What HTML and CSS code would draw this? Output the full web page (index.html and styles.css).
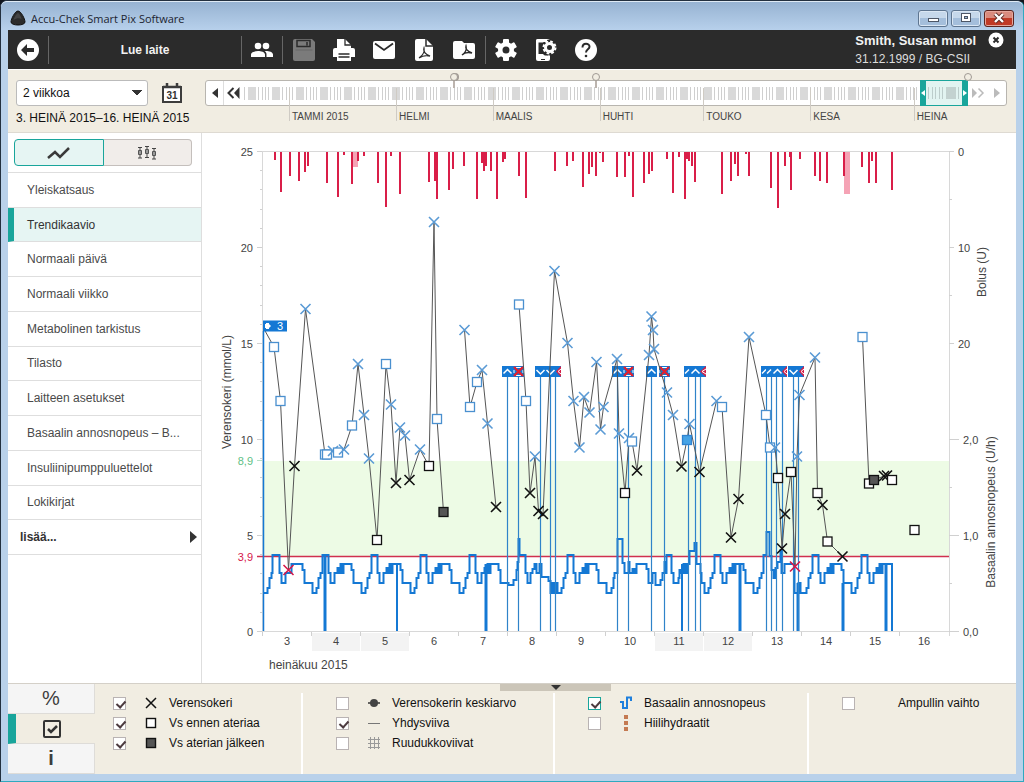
FILE: index.html
```html
<!DOCTYPE html>
<html lang="fi">
<head>
    <meta charset="UTF-8">
    <meta name="viewport" content="width=device-width, initial-scale=1.0">
    <title>Accu-Chek Smart Pix Software</title>
    <link rel="stylesheet" href="styles.css">
</head>
<body>
    <div class="window">
        <div class="titlebar">
            <svg class="app-icon" width="16" height="16" viewBox="0 0 16 16"><path d="M8 1C5 1 1 9 1 12c0 4 14 4 14 0C15 9 11 1 8 1z" fill="#2b2b2b" stroke="#111"/><path d="M8 3c-2 1-4 5-4.500 7 3-2 6-2 8-1C11 7 10 4 8 3z" fill="#444"/></svg>
            <span class="app-title">Accu-Chek Smart Pix Software</span>
            <button class="win-btn" aria-label="Pienennä"><svg width="14" height="12" viewBox="0 0 14 12"><rect x="2.500" y="6.500" width="10" height="3" fill="#fff" stroke="#4d5666"/></svg></button>
            <button class="win-btn" aria-label="Suurenna"><svg width="14" height="12" viewBox="0 0 14 12"><rect x="2.500" y="1.500" width="9" height="8" fill="#fff" stroke="#4d5666"/><rect x="5.500" y="4.500" width="3" height="2" fill="#9db8d6" stroke="#4d5666"/></svg></button>
            <button class="win-btn win-close" aria-label="Sulje"><svg width="14" height="12" viewBox="0 0 14 12"><path d="M3 2l8 8M11 2l-8 8" stroke="#5a2a25" stroke-width="4"/><path d="M3 2l8 8M11 2l-8 8" stroke="#fff" stroke-width="2.400"/></svg></button>
        </div>

        <div class="toolbar">
            <button class="tool" aria-label="Takaisin"><svg width="24" height="24" viewBox="0 0 24 24"><circle cx="12" cy="12" r="11" fill="#fff"/><path d="M5 12l6-6v4h7v4h-7v4z" fill="#2b2b2b"/></svg></button>
            <button class="read-device">Lue laite</button>
            <button class="tool" aria-label="Potilaat"><svg width="24" height="24" viewBox="0 0 24 24" fill="#fff"><circle cx="8" cy="8" r="3.300"/><circle cx="16" cy="8" r="3.300"/><path d="M1 19v-2.500C1 14 5 13 8 13s7 1 7 3.500V19zM16 13c3 0 7 1 7 3.500V19h-6.500v-2.500c0-1.500-.7-2.600-1.800-3.400z"/></svg></button>
            <div class="tool-group">
                <button class="tool" aria-label="Tallenna" disabled><svg width="24" height="24" viewBox="0 0 24 24"><path d="M1 3q0-2 2-2h17l3 3v17q0 2-2 2H3q-2 0-2-2z" fill="#7b7b7b"/><path d="M5 2.500h13v6H5zM15 4v3.500" fill="none" stroke="#2b2b2b" stroke-width="1.500"/><path d="M3.500 12h17" stroke="#696969"/></svg></button>
                <button class="tool" aria-label="Tulosta"><svg width="24" height="24" viewBox="0 0 24 24"><path d="M1 19v-7q0-2 2-2h2V1h8l6 6v3h2q2 0 2 2v7h-4v4H5v-4z" fill="#fff"/><path d="M13 1v6h6M6.500 16h11M6.500 19h11" fill="none" stroke="#2b2b2b" stroke-width="1.300"/></svg></button>
                <button class="tool" aria-label="Sähköposti"><svg width="24" height="24" viewBox="0 0 24 24"><rect x="1" y="3" width="22" height="18" rx="2" fill="#fff"/><path d="M3 5.500l9 6.500 9-6.500" fill="none" stroke="#2b2b2b" stroke-width="1.800"/></svg></button>
                <button class="tool" aria-label="PDF"><svg width="24" height="24" viewBox="0 0 24 24"><path d="M3 3q0-2 2-2h9l7 7v13q0 2-2 2H5q-2 0-2-2z" fill="#fff"/><path d="M14 1v7h7" fill="none" stroke="#2b2b2b" stroke-width="1.500"/><path d="M12 10c-1 3 1 6 6 8-4-1-8 0-11 2 3-2 6-6 5-10z" fill="none" stroke="#2b2b2b" stroke-width="1.300"/></svg></button>
                <button class="tool" aria-label="PDF-kansio"><svg width="24" height="24" viewBox="0 0 24 24"><path d="M1 5q0-2 2-2h7l2 2h9q2 0 2 2v12q0 2-2 2H3q-2 0-2-2z" fill="#fff"/><path d="M14 8c-1 3 1 5 6 7-4-1-8 0-10 2 3-2 5-5 4-9z" fill="none" stroke="#2b2b2b" stroke-width="1.400"/></svg></button>
            </div>
            <button class="tool" aria-label="Asetukset"><svg width="24" height="24" viewBox="0 0 24 24"><g fill="#fff"><circle cx="12" cy="12" r="8"/><rect x="9" y="1" width="6" height="22" rx="1"/><rect x="9" y="1" width="6" height="22" rx="1" transform="rotate(60 12 12)"/><rect x="9" y="1" width="6" height="22" rx="1" transform="rotate(120 12 12)"/></g><circle cx="12" cy="12" r="3.500" fill="#2b2b2b"/></svg></button>
            <button class="tool" aria-label="Laitteen asetukset"><svg width="24" height="24" viewBox="0 0 24 24"><rect x="2" y="1" width="14" height="22" rx="2" fill="#fff"/><path d="M4 4.500h10v13H4z" fill="#2b2b2b"/><circle cx="15.500" cy="9.500" r="8" fill="#2b2b2b"/><path d="M2 19V3q0-2 2-2h9v3H4.500v12H9l3 3z" fill="#fff"/><path d="M7 21.500h4" stroke="#2b2b2b"/><circle cx="15.500" cy="9.500" r="4" fill="none" stroke="#fff" stroke-width="3"/><circle cx="15.500" cy="9.500" r="6" fill="none" stroke="#fff" stroke-width="2" stroke-dasharray="2.700 2"/></svg></button>
            <button class="tool" aria-label="Ohje"><svg width="24" height="24" viewBox="0 0 24 24"><circle cx="12" cy="12" r="11" fill="#fff"/><path d="M8.500 9.500c0-5 7-4.500 7-.8 0 2.600-3.500 2.600-3.500 5.800" fill="none" stroke="#2b2b2b" stroke-width="2"/><circle cx="12" cy="18" r="1.300" fill="#2b2b2b"/></svg></button>
            <div class="patient">
                <strong>Smith, Susan mmol</strong>
                <span>31.12.1999 / BG-CSII</span>
            </div>
            <button class="patient-close" aria-label="Sulje potilas"><svg width="16" height="16" viewBox="0 0 16 16"><circle cx="8" cy="8" r="7.500" fill="#fff"/><path d="M5.500 5.500l5 5M10.500 5.500l-5 5" stroke="#2b2b2b" stroke-width="2"/></svg></button>
        </div>

        <div class="period">
            <div class="period-picker">
                <div class="period-row">
                    <select class="period-select" aria-label="Ajanjakso">
                        <option>2 viikkoa</option>
                    </select>
                    <button class="calendar" aria-label="Kalenteri"><svg width="22" height="22" viewBox="0 0 22 22"><path d="M2 5h18v15H2z" fill="#fff" stroke="#3d3d3d" stroke-width="2"/><path d="M2 5h18M6 1v5M16 1v5" stroke="#3d3d3d" stroke-width="2.500"/><text x="11" y="17" class="calendar-day">31</text></svg></button>
                </div>
                <div class="period-dates">3. HEINÄ 2015–16. HEINÄ 2015</div>
            </div>
            <div class="timeline">
                <div class="track">
                    <button class="step step-first" aria-label="Edellinen"><svg width="8" height="12" viewBox="0 0 8 12"><path d="M7 1v10L1 6z" fill="#333"/></svg></button>
                    <button class="step" aria-label="Taaksepäin"><svg width="14" height="12" viewBox="0 0 14 12"><path d="M6.500 1l-5 5 5 5" fill="none" stroke="#333" stroke-width="2"/><path d="M12.500 0v12L7 6z" fill="#333"/></svg></button>
                    <div class="days"></div>
                    <div class="range"><span class="handle"><svg width="4" height="6" viewBox="0 0 4 6"><path d="M4 0v6L0 3z" fill="#fff"/></svg></span><div class="days range-days"></div><span class="handle"><svg width="4" height="6" viewBox="0 0 4 6"><path d="M0 0v6l4-3z" fill="#fff"/></svg></span></div>
                    <button class="step" aria-label="Eteenpäin"><svg width="14" height="12" viewBox="0 0 14 12"><path d="M1 1v10l5-5z" fill="#bbb"/><path d="M7.500 1.500L12 6l-4.500 4.500" fill="none" stroke="#bbb" stroke-width="1.500"/></svg></button>
                    <button class="step step-last" aria-label="Seuraava"><svg width="8" height="12" viewBox="0 0 8 12"><path d="M1 1v10l6-5z" fill="#bbb"/></svg></button>
                    <span class="pin pin-helmi"></span>
                    <span class="pin pin-maalis"></span>
                    <span class="pin pin-heina"></span>
                </div>
                <div class="months">
                    <span>TAMMI 2015</span><span>HELMI</span><span>MAALIS</span><span>HUHTI</span><span>TOUKO</span><span>KESA</span><span>HEINA</span>
                </div>
            </div>
        </div>

        <div class="main">
            <div class="sidebar">
                <div class="view-toggle">
                    <button class="active" aria-label="Trendi"><svg width="24" height="14" viewBox="0 0 24 14"><path d="M1 12l7-6 5 5L22 2" fill="none" stroke="#3a3a3a" stroke-width="2.500"/></svg></button>
                    <button aria-label="Hajonta"><svg width="20" height="14" viewBox="0 0 20 14"><path d="M1 1.500h4M3 1v11M1 12h4M8 .5h4M10 1v11M8 11.500h4M15 2.500h4M17 2v11M15 13h4" stroke="#444"/><path d="M1.500 4.500h3v4h-3zM8.500 3.500h3v4h-3zM15.500 5.500h3v4h-3z" fill="#999" stroke="#555"/></svg></button>
                </div>
                <ul class="menu">
                    <li><a href="#">Yleiskatsaus</a></li>
                    <li><a href="#" class="active">Trendikaavio</a></li>
                    <li><a href="#">Normaali päivä</a></li>
                    <li><a href="#">Normaali viikko</a></li>
                    <li><a href="#">Metabolinen tarkistus</a></li>
                    <li><a href="#">Tilasto</a></li>
                    <li><a href="#">Laitteen asetukset</a></li>
                    <li><a href="#">Basaalin annosnopeus – B...</a></li>
                    <li><a href="#">Insuliinipumppuluettelot</a></li>
                    <li><a href="#">Lokikirjat</a></li>
                    <li><a href="#" class="more">lisää...<svg width="7" height="12" viewBox="0 0 7 12"><path d="M0 0v12l7-6z" fill="#333"/></svg></a></li>
                </ul>
            </div>
            <div class="chart-area">
                <svg id="chart" class="chart" viewBox="202 133 814 550" role="img" aria-label="Trendikaavio"></svg>
            </div>
        </div>

        <div class="footer">
            <button class="panel-handle" aria-label="Piilota selite"><svg width="10" height="5" viewBox="0 0 10 5"><path d="M0 0h10L5 5z" fill="#333"/></svg></button>
            <div class="tabs">
                <button aria-label="Prosentit">%</button>
                <button class="active" aria-label="Selite"><svg width="18" height="18" viewBox="0 0 18 18"><rect x="1" y="1" width="16" height="16" rx="1" fill="none" stroke="#333" stroke-width="2"/><path d="M5 9l3 3 6-6" fill="none" stroke="#333" stroke-width="2.500"/></svg></button>
                <button class="info" aria-label="Tiedot">i</button>
            </div>
            <div class="legends">
                <div class="legend legend-first">
                    <label><input type="checkbox" checked><svg viewBox="0 0 16 16"><path d="M3 3l10 10M13 3L3 13" stroke="#111" stroke-width="1.500"/></svg>Verensokeri</label>
                    <label><input type="checkbox" checked><svg viewBox="0 0 16 16"><rect x="3.500" y="3.500" width="9" height="9" fill="#fff" stroke="#111" stroke-width="1.400"/></svg>Vs ennen ateriaa</label>
                    <label><input type="checkbox" checked><svg viewBox="0 0 16 16"><rect x="3.500" y="3.500" width="9" height="9" fill="#555" stroke="#111" stroke-width="1.400"/></svg>Vs aterian jälkeen</label>
                </div>
                <div class="legend">
                    <label><input type="checkbox"><svg viewBox="0 0 16 16"><path d="M2 8h12" stroke="#333" stroke-width="1.500"/><circle cx="8" cy="8" r="4" fill="#444"/></svg>Verensokerin keskiarvo</label>
                    <label><input type="checkbox" checked><svg viewBox="0 0 16 16"><path d="M2 8.500h12" stroke="#777"/></svg>Yhdysviiva</label>
                    <label><input type="checkbox"><svg viewBox="0 0 16 16"><path d="M2 4.500h12M2 8.500h12M2 12.500h12M4.500 2v12M8.500 2v12M12.500 2v12" stroke="#999"/></svg>Ruudukkoviivat</label>
                </div>
                <div class="legend">
                    <label><input type="checkbox" class="teal" checked><svg viewBox="0 0 16 16"><path d="M2 7h3v6h4V2.500h4V6" fill="none" stroke="#1e7fdc" stroke-width="2"/></svg>Basaalin annosnopeus</label>
                    <label><input type="checkbox"><svg viewBox="0 0 16 16"><path d="M8 0v16" stroke="#c47a52" stroke-width="4" stroke-dasharray="4 2"/></svg>Hiilihydraatit</label>
                </div>
                <div class="legend">
                    <label><input type="checkbox"><svg viewBox="0 0 16 16"></svg>Ampullin vaihto</label>
                </div>
            </div>
        </div>
    </div>

    <script src="script.js"></script>
</body>
</html>
```
FILE: styles.css
```css
* {
    box-sizing: border-box;
}
body {
    margin: 0;
    background: #10141c;
    font-family: "Liberation Sans", Arial, sans-serif;
    font-size: 12px;
    color: #222;
}
button {
    font-family: inherit;
    font-size: 12px;
    padding: 0;
    border: 0;
    background: none;
    display: flex;
    align-items: center;
    justify-content: center;
}

.window {
    min-height: 100vh;
    display: flex;
    flex-direction: column;
    padding: 0 7px 7px;
    border: 1px solid #23303f;
    border-right-color: #2fa9bf;
    border-bottom-color: #2fa9bf;
    border-radius: 7px 7px 0 0;
    background: #b9d1ea;
}
.titlebar {
    height: 29px;
    margin: 0 -7px;
    padding: 0 9px;
    display: flex;
    align-items: center;
    gap: 3px;
    border-top: 1px solid #dfeaf5;
    border-radius: 6px 6px 0 0;
    background: linear-gradient(#97b3d2, #b7d0eb);
}
.app-title {
    flex: 1;
    margin-left: 2px;
    font-family: "Open Sans", "Noto Sans", sans-serif;
    font-size: 11px;
    color: #1c2430;
    padding-top: 4px;
}
.app-icon {
    margin-top: 4px;
}
.win-btn {
    width: 30px;
    height: 17px;
    margin-top: 4px;
    border: 1px solid #5e7590;
    border-radius: 3px;
    box-shadow: inset 0 0 0 1px #dbe7f4;
    background: linear-gradient(#c6d8eb 50%, #a4bedb 50%);
}
.win-close {
    border-color: #5b2520;
    box-shadow: inset 0 0 0 1px #e5a79c;
    background: linear-gradient(#d98b7e 50%, #c03a26 50%);
}

.toolbar {
    height: 39px;
    display: flex;
    align-items: center;
    background: #2b2b2b;
    color: #fff;
}
.tool {
    width: 40px;
    height: 28px;
}
.read-device {
    width: 194px;
    height: 28px;
    border-left: 1px solid #666;
    border-right: 1px solid #666;
    font-weight: bold;
    color: #f2f2f2;
}
.tool-group {
    display: flex;
    padding: 0 1px;
    border-left: 1px solid #666;
    border-right: 1px solid #666;
}
.patient {
    margin-left: auto;
    display: flex;
    flex-direction: column;
    line-height: 18px;
    color: #ddd;
}
.patient strong {
    font-size: 13px;
    color: #f2f2f2;
}
.patient-close {
    align-self: flex-start;
    margin: 2px 12px 0;
}

.period {
    height: 64px;
    display: flex;
    gap: 16px;
    padding: 10px 9px 0 8px;
    background: #f1ede2;
    border-top: 1px solid #fff;
    border-bottom: 1px solid #dedad2;
}
.period-picker {
    width: 173px;
    white-space: nowrap;
}
.period-row {
    display: flex;
    gap: 12px;
}
.period-select {
    width: 132px;
    height: 26px;
    padding: 0 6px;
    border: 1px solid #bbb;
    border-radius: 3px;
    appearance: none;
    font: inherit;
    color: #111;
    background: linear-gradient(to bottom left, #333 50%, transparent 50%) right 10px center / 5px 6px no-repeat, linear-gradient(to bottom right, #333 50%, transparent 50%) right 5px center / 5px 6px no-repeat, #fff;
}
.calendar {
    width: 24px;
    height: 26px;
}
.calendar-day {
    font-size: 10px;
    font-weight: bold;
    fill: #333;
    text-anchor: middle;
}
.period-dates {
    margin-top: 4px;
    line-height: 16px;
    color: #111;
}
.timeline {
    flex: 1;
}
.track {
    position: relative;
    height: 26px;
    display: flex;
    align-items: stretch;
    border: 1px solid #b8b5af;
    border-radius: 3px;
    background: #fff;
}
.step {
    width: 20px;
}
.step-first,
.step-last {
    width: 18px;
}
.step-first {
    border-right: 1px solid #ddd;
}
.days {
    flex: 1;
    margin: 6px 1px 5px 0;
    background: repeating-linear-gradient(90deg, #cfcfcf 0 1px, transparent 1px 4px, #d9d9d9 4px 12px, transparent 12px 14px, #cfcfcf 14px 15px, transparent 15px 18px, #cfcfcf 18px 19px, transparent 19px 21px, #cfcfcf 21px 22px, transparent 22px 24px);
}
.range {
    width: 48px;
    margin: -1px 0;
    display: flex;
    border-top: 1px solid #19a59b;
    border-bottom: 1px solid #19a59b;
    background: #e2f4f1;
}
.range-days {
    margin: 6px 2px;
    background: repeating-linear-gradient(90deg, #bccdcb 0 1px, transparent 1px 4px, #bccdcb 4px 5px, transparent 5px 7px, #bccdcb 7px 8px, transparent 8px 11px, #bccdcb 11px 12px, transparent 12px 14px, #bccdcb 14px 15px, transparent 15px 18px, #c3d2d0 18px 28px, transparent 28px 30px);
}
.handle {
    width: 6px;
    display: flex;
    align-items: center;
    justify-content: center;
    background: #19a59b;
}
.pin {
    position: absolute;
    top: -8px;
    width: 8px;
    height: 8px;
    border: 1px solid #a09a94;
    border-radius: 50%;
    background: #f1ede2;
}
.pin::after {
    content: "";
    position: absolute;
    left: 2px;
    top: 7px;
    width: 2px;
    height: 7px;
    background: #bcb4ae;
}
.pin-helmi {
    left: 30.5%;
    box-shadow: 1px 0 0 #a09a94;
}
.pin-maalis {
    left: 48.2%;
}
.pin-heina {
    left: 94.8%;
}
.pin-heina::after {
    display: none;
}
.months {
    position: relative;
    margin: -18px 0 0 84px;
    display: grid;
    grid-template-columns: 31fr 28fr 31fr 30fr 31fr 30fr 27fr;
    font-size: 10px;
    color: #444;
    pointer-events: none;
}
.months span {
    height: 33px;
    padding: 22px 0 0 2px;
    border-left: 1px solid #cfcbc4;
    white-space: nowrap;
    line-height: 14px;
}

.main {
    flex: 1;
    display: flex;
    background: #fff;
}
.sidebar {
    width: 194px;
    border-right: 1px solid #dedede;
}
.view-toggle {
    display: flex;
    padding: 6px 9px 6px 6px;
    border-bottom: 1px solid #dedede;
}
.view-toggle button {
    flex: 1;
    height: 27px;
    border: 1px solid #c4bfbc;
    border-left: 0;
    border-radius: 0 4px 4px 0;
    background: #f1edea;
}
.view-toggle .active {
    border: 1px solid #19a59b;
    border-radius: 4px 0 0 4px;
    background: #e6f5f3;
}
.menu {
    list-style: none;
    margin: 0;
    padding: 0;
    height: 382px;
    display: grid;
    grid-auto-rows: 1fr;
}
.menu a {
    height: 100%;
    display: flex;
    align-items: center;
    justify-content: space-between;
    padding-left: 19px;
    border-bottom: 1px solid #dedede;
    color: #4a4a4a;
    text-decoration: none;
}
.menu .active {
    padding-left: 13px;
    border-left: 6px solid #19a59b;
    background: #e6f5f3;
    color: #333;
}
.menu .more {
    padding: 0 4px 0 12px;
    font-weight: bold;
    color: #333;
}
.chart-area {
    flex: 1;
    min-width: 0;
}
.chart {
    display: block;
    width: 100%;
}
.chart text {
    font-size: 11px;
    fill: #444;
}
.chart .axis-title,
.chart .month {
    font-size: 12px;
}
.chart .high {
    fill: #5fbf86;
}
.chart .low {
    fill: #d6174a;
}
.chart .flag-text {
    fill: #fff;
}

.footer {
    position: relative;
    height: 91px;
    display: flex;
    background: #f1ede2;
    border-top: 1px solid #d4d0c8;
}
.panel-handle {
    position: absolute;
    left: calc(50% - 12px);
    top: 0;
    width: 111px;
    height: 7px;
    background: #cbc5b8;
}
.tabs {
    width: 87px;
    display: flex;
    flex-direction: column;
}
.tabs button {
    flex: 1;
    border-right: 1px solid #dedcd8;
    border-bottom: 1px solid #dedcd8;
    background: #f5f5f5;
    font-size: 20px;
    color: #3d3d3d;
}
.tabs .active {
    border-left: 8px solid #19a59b;
    border-right: 0;
    padding-right: 8px;
    background: #f1ede2;
}
.tabs .info {
    font-weight: bold;
}
.legends {
    flex: 1;
    display: grid;
    grid-template-columns: 208fr 252fr 254fr 207fr;
    padding-top: 9px;
}
.legend {
    padding-left: 33px;
    border-right: 2px solid #fff;
    white-space: nowrap;
}
.legend-first {
    padding-left: 18px;
}
.legend:last-child {
    border-right: 0;
}
.legend label {
    height: 20px;
    display: flex;
    align-items: center;
    color: #111;
}
.legend svg {
    width: 16px;
    height: 16px;
    margin: 0 10px 0 17px;
}
.legend input {
    appearance: none;
    width: 13px;
    height: 13px;
    margin: 0;
    border: 1px solid #b9b3b3;
    background: #fff;
    position: relative;
}
.legend .teal {
    border-color: #19a59b;
}
.legend input:checked::after {
    content: "";
    position: absolute;
    left: 4px;
    top: 1px;
    width: 4px;
    height: 7px;
    border: solid #4d3b3f;
    border-width: 0 2px 2px 0;
    transform: rotate(42deg);
}
```
FILE: script.js
```javascript
const chart = document.getElementById('chart');
const LEFT = 263, RIGHT = 949, TOP = 152, BOTTOM = 631;
const DAY = 49;
let out = '';

function line(x1, y1, x2, y2, color, width = 1) {
    out += `<line x1="${x1}" y1="${y1}" x2="${x2}" y2="${y2}" stroke="${color}" stroke-width="${width}"/>`;
}
function rect(x, y, w, h, fill) {
    out += `<rect x="${x}" y="${y}" width="${w}" height="${h}" fill="${fill}"/>`;
}
function text(x, y, value, anchor = 'start', cls = '') {
    out += `<text x="${x}" y="${y}" text-anchor="${anchor}" class="${cls}">${value}</text>`;
}
function verticalText(x, y, value) {
    out += `<text transform="translate(${x} ${y}) rotate(-90)" text-anchor="middle" class="axis-title">${value}</text>`;
}

// target range and axes
rect(LEFT, 461, RIGHT - LEFT, 95, '#edfbe5');
line(LEFT - 5, 151.5, RIGHT + 4, 151.5, '#d8d8d8');
line(LEFT - 5, 631.5, RIGHT + 10, 631.5, '#d8d8d8');
line(262.5, TOP, 262.5, 636, '#d8d8d8');
line(949.5, TOP, 949.5, 636, '#d8d8d8');
for (let v = 0; v <= 25; v++) {
    const y = Math.round(BOTTOM - v * 19.2) + 0.5;
    line(v % 5 ? 260 : 257, y, 262, y, '#d0d0d0');
    if (v % 5 === 0) text(253, y + 4, v, 'end');
}
[[152, '0'], [248, '10'], [344, '20']].forEach(([y, t]) => {
    line(949, y - 0.5, 954, y - 0.5, '#d0d0d0');
    if (y < 300) line(949, y + 47.5, 952, y + 47.5, '#d0d0d0');
    text(958, y + 4, t);
});
[[440, '2,0'], [536, '1,0'], [632, '0,0']].forEach(([y, t]) => {
    line(949, y - 0.5, 959, y - 0.5, '#d0d0d0');
    if (y < 600) line(949, y + 47.5, 952, y + 47.5, '#d0d0d0');
    text(963, y + 4, t);
});
text(253, 465, '8,9', 'end', 'high');
text(253, 561, '3,9', 'end', 'low');
line(257, 460.5, 262, 460.5, '#b5dfc4');
verticalText(231, 392, 'Verensokeri (mmol/L)');
verticalText(986, 272, 'Bolus (U)');
verticalText(995, 512, 'Basaalin annosnopeus (U/h)');

// day labels, weekends shaded
for (let d = 3; d <= 16; d++) {
    const x = LEFT + (d - 3) * DAY;
    if ([4, 5, 11, 12].includes(d)) rect(x, 633, DAY - 1, 18, '#f3f3f3');
    line(x - 0.5, 632, x - 0.5, 636, '#d0d0d0');
    text(x + 24, 645, d, 'middle');
}
text(269, 669, 'heinäkuu 2015', 'start', 'month');

// bolus bars: x, bottom
rect(353, TOP, 5, 15, '#f5a3b5');
rect(844, TOP, 6, 42, '#f5a3b5');
const bolus = [
    [275, 160], [281, 192], [290, 176], [299, 181], [305, 172], [308, 166], [327, 183], [338, 197], [344, 155],
    [352, 184], [358, 161], [364, 156], [378, 183], [386, 207], [391, 156], [400, 194], [429, 182], [435, 181],
    [437, 199], [449, 190], [453, 169], [464, 166], [477, 199], [482, 163], [484, 171], [486, 166], [491, 171],
    [497, 199], [503, 162], [505, 159], [519, 176], [526, 198], [555, 171], [567, 166], [573, 161], [583, 187],
    [589, 174], [592, 167], [596, 176], [600, 153], [603, 162], [617, 177], [625, 177], [629, 156], [633, 197],
    [644, 183], [649, 174], [652, 171], [667, 159], [673, 193], [679, 157], [685, 199], [687, 159], [689, 161],
    [692, 166], [695, 182], [722, 194], [731, 181], [735, 164], [738, 176], [746, 154], [749, 176], [771, 188],
    [778, 208], [785, 166], [790, 157], [791, 190], [800, 159], [815, 176], [820, 181], [827, 183], [844, 176],
    [862, 167], [869, 183], [872, 161], [876, 183], [892, 190]
];
bolus.forEach(([x, y]) => rect(x - 1, TOP, 2, y - TOP, '#d91e48'));

line(257, 556.5, RIGHT, 556.5, '#d0304f', 1.5);

// basal rate steps: offset in the day, y
const normal = [[0, 593], [4, 588], [6, 578], [8, 573], [10, 555], [16, 573], [18, 583], [22, 573], [25, 568],
    [27, 573], [28, 564], [29, 573], [31, 564], [39, 570], [41, 583]];
const days = {
    3: [[0, 593], [4, 588], [6, 578], [8, 573], [9, 555], [16, 573], [18, 583], [22, 573], [28, 564], [39, 570], [41, 583]],
    8: [[0, 585], [5, 580], [8, 570], [9, 562], [10, 539], [11, 555], [17, 573], [19, 583], [22, 573], [24, 569],
        [26, 564], [28, 573], [31, 564], [33, 577], [40, 581], [42, 593], [44, 583], [46, 593], [48, 583]],
    10: [[0, 593], [5, 588], [7, 578], [8, 573], [11, 539], [16, 563], [18, 573], [22, 562], [23, 573], [26, 569],
        [28, 573], [30, 564], [40, 569], [42, 583], [46, 573]],
    11: [[0, 585], [5, 580], [7, 573], [9, 562], [10, 573], [11, 555], [16, 573], [18, 583], [23, 578], [24, 570],
        [26, 573], [28, 564], [30, 573], [32, 564], [34, 551], [39, 543], [41, 564], [45, 573], [46, 583]],
    13: [[0, 593], [4, 588], [6, 578], [8, 573], [10, 555], [13, 532], [16, 556], [18, 570], [20, 578], [22, 568],
        [24, 562], [27, 550], [28, 573], [31, 564], [41, 593], [45, 583], [47, 593]]
};
let path = 'M263.5 593';
for (let d = 3; d <= 15; d++) {
    (days[d] || normal).forEach(([dx, y]) => {
        if (d === 15 && dx > 36) return;
        path += `H${LEFT + 0.5 + (d - 3) * DAY + dx}V${y}`;
    });
}
out += `<path d="${path}H892V631" fill="none" stroke="#1478d4" stroke-width="2"/>`;
[[325, 3, 555], [397, 2, 564], [486, 3, 564], [682, 2, 564], [740, 3, 564], [798, 3, 583], [843, 3, 583], [886, 3, 564]]
    .forEach(([x, w, y]) => line(x, y, x, BOTTOM, '#1478d4', w));
line(263.5, 331, 263.5, BOTTOM, '#1478d4', 1.5);

// temporary basal rates
[507.5, 518.5, 540.5, 550.5, 555.5, 617.5, 628.5, 651.5, 664.5, 688.5, 695.5, 700.5, 766.5, 771.5, 776.5, 782.5, 793.5, 798.5]
    .forEach(x => line(x, 377, x, BOTTOM, '#2f83c9', 1.2));
const flags = [
    [502, 11, 'up'], [513, 11, 'stop'], [535, 11, 'down'], [545, 11, 'down'], [556, 5, 'cut'], [612, 11, 'up'],
    [623, 11, 'stop'], [646, 11, 'up'], [659, 11, 'stop'], [684, 6, 'slash'], [690, 11, 'up'], [700, 6, 'cut'],
    [761, 6, 'slash'], [766, 6, 'slash'], [772, 11, 'up'], [782, 5, 'cut'], [788, 11, 'down'], [799, 5, 'cut']
];
const marks = {
    up: 'M1.5 7.5l4-4 4 4',
    down: 'M1.5 4l4 4 4-4',
    slash: 'M1 7.5l4-4'
};
flags.forEach(([x, w, type]) => {
    rect(x, 366, w, 11, '#1478d4');
    out += `<g transform="translate(${x} 366)" fill="none" stroke="#fff">`;
    if (type === 'stop') {
        out += '<path d="M3 1.500h5M3 9.500h5M1 4v3M10 4v3"/><path d="M1 1l9 9M10 1l-9 9" stroke="#e02030" stroke-width="2.300"/>';
    } else if (type === 'cut') {
        out += `<path d="M${w} 0v11L0 5.500z" fill="#d22048" stroke="none"/><path d="M${w} 3L2 5.500 ${w} 8"/>`;
    } else {
        out += `<path d="${marks[type]}" stroke-width="1.500"/>`;
    }
    out += '</g>';
});

// glucose values: x, y, marker
// x/s = cross/square above range, X/S/F = in range, r = below, b = filled above
const series = [
    [[264, 329, ''], [274, 347, 's'], [280.5, 401, 's'], [288.5, 570, 'r'], [294.5, 466, 'X'], [305.5, 309, 'x'],
        [325, 454.5, 's'], [327, 454.5, 's'], [333, 451, 'x'], [338, 452.5, 's'], [344, 449.5, 'x'], [352, 425.5, 's'],
        [358, 364, 'x'], [364, 415, 'x'], [369, 458.5, 'x'], [377, 540, 'S'], [386, 364, 's'], [391, 404.5, 'x'],
        [396, 483, 'X'], [400, 427.5, 'x'], [405, 435.5, 'x'], [409.5, 480, 'X'], [420, 449.5, 'x'], [429, 466, 'S'],
        [434, 222, 'x'], [437, 419, 's'], [443.5, 512, 'F']],
    [[464.5, 330, 'x'], [470, 407, 's'], [477, 382, 's'], [482, 370, 'x'], [487.5, 423.5, 'x'], [496, 507, 'X']],
    [[519, 304.5, 's'], [526, 401, 's'], [530, 493, 'X'], [535, 456.5, 'x'], [538.5, 511, 'X'], [543, 514, 'X'],
        [554.5, 271, 'x'], [567.5, 343, 'x'], [573.5, 401, 'x'], [579.5, 447.5, 'x'], [584, 397, 'x'], [589.5, 412.5, 'x'],
        [596.5, 362, 'x'], [600.5, 429.5, 'x'], [603.5, 407, 'x'], [617, 359, 'x'], [619, 433.5, 'x'], [625, 493, 'S'],
        [629, 438, 'x'], [632, 441.5, 's'], [637, 470.5, 'X'], [649, 355, 'x'], [651.5, 316.5, 'x'], [653, 330, 'x'],
        [654, 349, 'x'], [667, 392.5, 'x'], [673, 415, 'x'], [681.5, 466.5, 'X'], [687, 440, 'b'], [689.5, 424, 'x'],
        [699.5, 472, 'X'], [716.5, 401, 'x'], [722, 407, 's'], [731, 537.5, 'X'], [738.5, 499, 'X'], [749, 337, 'x'],
        [766, 415, 's'], [770, 447.5, 's'], [775, 447.5, 'x'], [778, 478, 'S'], [782, 548.5, 'X'], [785, 514, 'X'],
        [791, 472, 'S'], [795, 566.5, 'r'], [797, 456.5, 'x'], [799.5, 395, 'x'], [815, 357.5, 'x'], [817.5, 493, 'S'],
        [822.5, 505, 'X'], [827.5, 541.5, 'S'], [842.5, 556.5, 'X']],
    [[862.5, 337, 's'], [869, 483.5, 'S'], [874, 480, 'F'], [884, 476, 'X'], [887, 475.5, 'X'], [892, 480, 'S']],
    [[914.5, 530, 'S']]
];
const colors = { x: '#5b9bd5', s: '#4a90cf', b: '#2f83d0', X: '#111', S: '#111', F: '#111', r: '#d6174a' };
const fills = { s: '#fff', S: '#fff', F: '#555', b: '#45a3e6' };
series.forEach(points => {
    out += `<polyline points="${points.map(p => p[0] + ',' + p[1]).join(' ')}" fill="none" stroke="#555"/>`;
});
series.flat().forEach(([x, y, m]) => {
    if (!m) return;
    if (fills[m]) {
        out += `<rect x="${x - 4.5}" y="${y - 4.5}" width="9" height="9" fill="${fills[m]}" stroke="${colors[m]}" stroke-width="1.3"/>`;
    } else {
        out += `<path d="M${x - 5} ${y - 5}l10 10m0 -10l-10 10" stroke="${colors[m]}" stroke-width="1.6"/>`;
    }
});

// pump marker
rect(263, 320.5, 24, 11, '#1478d4');
out += '<path d="M265 324h1v-1h3v1l2 2-2 2v1h-3v-1h-1z" fill="#fff"/>';
text(277, 330, '3', 'start', 'flag-text');

chart.innerHTML = out;
```
